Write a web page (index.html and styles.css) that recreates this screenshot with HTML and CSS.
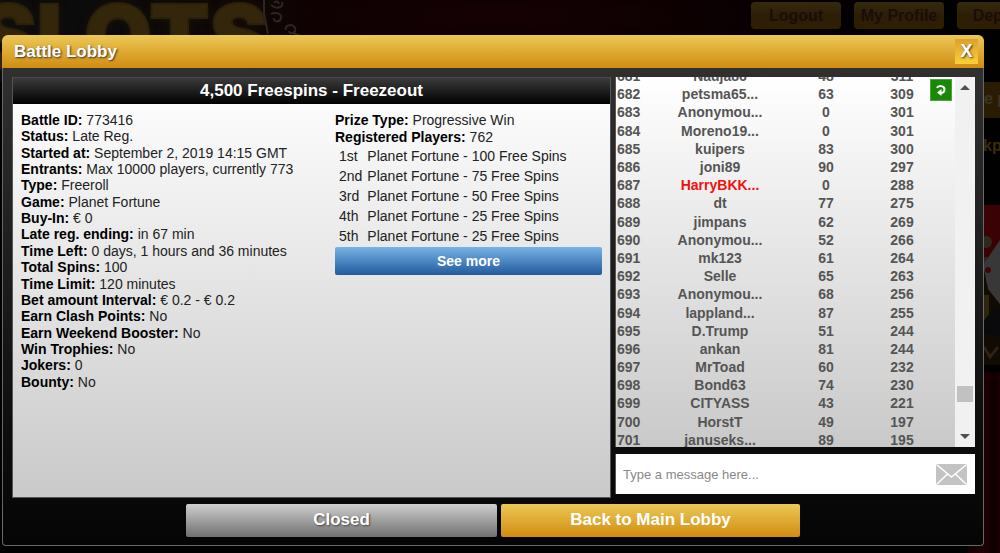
FILE: index.html
```html
<!DOCTYPE html>
<html lang="en">
<head>
    <meta charset="UTF-8">
    <meta name="viewport" content="width=device-width, initial-scale=1.0">
    <title>Battle Lobby</title>
    <link rel="stylesheet" href="styles.css">
</head>
<body>

    <div class="page">
        <header class="top">
            <div class="logo">SLOTS</div>
            <svg class="swirls" width="50" height="36" viewBox="0 0 50 36" fill="none" stroke="#2c2620" stroke-width="2">
                <path d="M4 0v14l4 20M11 5c6 5 13 2 11-3M14 3c2-3 6-1 4 1M11 14c4-2 11-1 10 4s-8 4-7 0M26 30c-2-5 7-7 9-2s-6 7-6 3M33 33l8 3"/>
            </svg>
            <nav class="menu">
                <button>Logout</button>
                <button>My Profile</button>
                <button>Deposit</button>
            </nav>
        </header>
        <aside class="side">
            <div class="side-button">e p</div>
            <div class="side-title">kp</div>
            <svg class="side-art" width="32" height="160" viewBox="0 0 32 160">
                <rect width="32" height="160" fill="#120b04"/>
                <path d="M0 0h32v40L14 58H0z" fill="#3a0204"/>
                <circle cx="18" cy="37" r="6" fill="#2c2a1c"/>
                <circle cx="18" cy="58" r="6" fill="#2c2a1c"/>
                <path d="M15 60L32 35v64L20 84z" fill="#383838"/>
                <circle cx="20" cy="65" r="3" fill="#3f0507"/>
                <path d="M14 90h7v26h-7z" fill="#2f250d"/>
                <path d="M14 118q10-14 18-14v30q-10-8-18-4z" fill="#0a0a0c"/>
                <path d="M16 142l6 10 8-10" stroke="#2d2410" stroke-width="3" fill="none"/>
            </svg>
            <div class="side-curtain"></div>
        </aside>
    </div>

    <div class="modal" role="dialog" aria-labelledby="lobby-title">
        <div class="modal-header">
            <h1 id="lobby-title">Battle Lobby</h1>
            <button class="close">X</button>
        </div>
        <div class="modal-body">
            <section class="info">
                <h2>4,500 Freespins - Freezeout</h2>
                <div class="info-content">
                    <ul class="details">
                        <li><b>Battle ID:</b> 773416</li>
                        <li><b>Status:</b> Late Reg.</li>
                        <li><b>Started at:</b> September 2, 2019 14:15 GMT</li>
                        <li><b>Entrants:</b> Max 10000 players, currently 773</li>
                        <li><b>Type:</b> Freeroll</li>
                        <li><b>Game:</b> Planet Fortune</li>
                        <li><b>Buy-In:</b> € 0</li>
                        <li><b>Late reg. ending:</b> in 67 min</li>
                        <li><b>Time Left:</b> 0 days, 1 hours and 36 minutes</li>
                        <li><b>Total Spins:</b> 100</li>
                        <li><b>Time Limit:</b> 120 minutes</li>
                        <li><b>Bet amount Interval:</b> € 0.2 - € 0.2</li>
                        <li><b>Earn Clash Points:</b> No</li>
                        <li><b>Earn Weekend Booster:</b> No</li>
                        <li><b>Win Trophies:</b> No</li>
                        <li><b>Jokers:</b> 0</li>
                        <li><b>Bounty:</b> No</li>
                    </ul>
                    <div class="prizes">
                        <p><b>Prize Type:</b> Progressive Win</p>
                        <p><b>Registered Players:</b> 762</p>
                        <table class="prize-table">
                            <tr><td>1st</td><td>Planet Fortune - 100 Free Spins</td></tr>
                            <tr><td>2nd</td><td>Planet Fortune - 75 Free Spins</td></tr>
                            <tr><td>3rd</td><td>Planet Fortune - 50 Free Spins</td></tr>
                            <tr><td>4th</td><td>Planet Fortune - 25 Free Spins</td></tr>
                            <tr><td>5th</td><td>Planet Fortune - 25 Free Spins</td></tr>
                        </table>
                        <button class="more">See more</button>
                    </div>
                </div>
            </section>

            <section class="right">
                <div class="ranking">
                    <div class="ranking-list">
                        <table class="players">
                            <tr><td>681</td><td>Nadja86</td><td>48</td><td>311</td></tr>
                            <tr><td>682</td><td>petsma65...</td><td>63</td><td>309</td></tr>
                            <tr><td>683</td><td>Anonymou...</td><td>0</td><td>301</td></tr>
                            <tr><td>684</td><td>Moreno19...</td><td>0</td><td>301</td></tr>
                            <tr><td>685</td><td>kuipers</td><td>83</td><td>300</td></tr>
                            <tr><td>686</td><td>joni89</td><td>90</td><td>297</td></tr>
                            <tr><td>687</td><td class="me">HarryBKK...</td><td>0</td><td>288</td></tr>
                            <tr><td>688</td><td>dt</td><td>77</td><td>275</td></tr>
                            <tr><td>689</td><td>jimpans</td><td>62</td><td>269</td></tr>
                            <tr><td>690</td><td>Anonymou...</td><td>52</td><td>266</td></tr>
                            <tr><td>691</td><td>mk123</td><td>61</td><td>264</td></tr>
                            <tr><td>692</td><td>Selle</td><td>65</td><td>263</td></tr>
                            <tr><td>693</td><td>Anonymou...</td><td>68</td><td>256</td></tr>
                            <tr><td>694</td><td>lappland...</td><td>87</td><td>255</td></tr>
                            <tr><td>695</td><td>D.Trump</td><td>51</td><td>244</td></tr>
                            <tr><td>696</td><td>ankan</td><td>81</td><td>244</td></tr>
                            <tr><td>697</td><td>MrToad</td><td>60</td><td>232</td></tr>
                            <tr><td>698</td><td>Bond63</td><td>74</td><td>230</td></tr>
                            <tr><td>699</td><td>CITYASS</td><td>43</td><td>221</td></tr>
                            <tr><td>700</td><td>HorstT</td><td>49</td><td>197</td></tr>
                            <tr><td>701</td><td>januseks...</td><td>89</td><td>195</td></tr>
                        </table>
                    </div>
                    <button class="refresh" aria-label="Refresh">
                        <svg width="12" height="12" viewBox="0 0 12 12">
                            <path d="M2 4C3 1.500 9.500 1 9.500 5.500C9.500 8 7.500 9 5 9" fill="none" stroke="#fff" stroke-width="2"/>
                            <path d="M6.500 5v7L2 8.500z" fill="#fff"/>
                        </svg>
                    </button>
                    <div class="scrollbar">
                        <svg width="10" height="5" viewBox="0 0 10 5"><path d="M0 5l5-5 5 5z" fill="#505050"/></svg>
                        <div class="thumb"></div>
                        <svg width="10" height="5" viewBox="0 0 10 5"><path d="M0 0l5 5 5-5z" fill="#505050"/></svg>
                    </div>
                </div>
                <form class="chat">
                    <input type="text" aria-label="Message" placeholder="Type a message here...">
                    <button type="button" aria-label="Send">
                        <svg width="31" height="21" viewBox="0 0 31 21">
                            <rect width="31" height="21" rx="2" fill="#c3c3c3"/>
                            <path d="M1 1l14.500 12L30 1M1 20l10.500-10M30 20L19.500 10" fill="none" stroke="#fff" stroke-width="1.500"/>
                        </svg>
                    </button>
                </form>
            </section>
        </div>
        <div class="modal-footer">
            <button class="closed">Closed</button>
            <button class="back">Back to Main Lobby</button>
        </div>
    </div>

</body>
</html>
```

FILE: styles.css
```css
* {
    box-sizing: border-box;
}
body {
    margin: 0;
    height: 100vh;
    overflow: hidden;
    position: relative;
    background: #020101;
    font-family: Arial, "Liberation Sans", sans-serif;
    font-size: 14px;
}
button, input {
    font-family: inherit;
    border: none;
    padding: 0;
}
button {
    cursor: pointer;
    font-weight: bold;
}
h1, h2, p, ul {
    margin: 0;
    padding: 0;
}
svg {
    display: block;
}

/* page behind the lobby */
.page {
    height: 100%;
    overflow: hidden;
    display: flex;
    flex-direction: column;
}
.top {
    display: flex;
    flex: none;
    height: 82px;
    background:
        radial-gradient(ellipse at 50% 20%, #160103, transparent 50%),
        linear-gradient(90deg, #0c0c0d, #0d0806 26%, #090001 32%, #060001 70%, #010101);
}
.logo {
    margin-left: -22px;
    margin-top: -16px;
    font-family: Inter, sans-serif;
    font-weight: 900;
    font-size: 88px;
    line-height: 104px;
    color: #33260a;
    -webkit-text-stroke: 2px #2a200c;
    text-shadow: 0 0 8px #1c1508;
}
.swirls {
    margin-left: -8px;
}
.menu {
    display: flex;
    gap: 13px;
    margin: 2px -47px 0 auto;
}
.menu button {
    width: 90px;
    height: 27px;
    border-radius: 4px;
    background: linear-gradient(#352a0e, #2c1e06 50%, #2f1e02);
    color: #1c0c0a;
    font-size: 16px;
    white-space: nowrap;
}
.side {
    align-self: flex-end;
    width: 32px;
}
.side-button {
    height: 36px;
    line-height: 34px;
    padding-left: 16px;
    margin-bottom: 19px;
    background: #2a1c02;
    color: #3b3524;
    font-size: 16px;
    font-weight: bold;
    white-space: nowrap;
}
.side-title {
    height: 68px;
    padding-left: 15px;
    color: #3b2b0b;
    font-size: 16px;
    font-weight: bold;
}
.side-curtain {
    height: 190px;
    margin-top: 7px;
    background: linear-gradient(90deg, #140001, #1e0002 60%, #0d0001 80%, #1a0002);
}

/* lobby window */
.modal {
    position: absolute;
    top: 35px;
    right: 16px;
    bottom: 7px;
    left: 2px;
    display: flex;
    flex-direction: column;
    border: 1px solid #686868;
    border-top: none;
    border-radius: 7px 7px 4px 4px;
    background: linear-gradient(#333, #2d2d2d 12%, #0c0c0c 80%, #050505);
}
.modal-header {
    display: flex;
    justify-content: space-between;
    align-items: center;
    height: 33px;
    margin: 0 -1px;
    padding: 0 6px 0 12px;
    border-radius: 6px 6px 0 0;
    background: linear-gradient(#ecc857, #d18c10);
}
.modal-header h1 {
    color: white;
    font-size: 17px;
    text-shadow: 1px 1px 2px #333;
}
.close {
    width: 23px;
    height: 25px;
    background: linear-gradient(#dda02c, #f9d036);
    color: white;
    font-size: 18px;
    text-shadow: 1px 1px 2px #333;
}
.modal-body {
    display: flex;
    flex: 1;
    gap: 4px;
    min-height: 0;
    padding: 9px 8px 0 9px;
}
.info {
    flex: 1;
    border: 1px solid #555;
    border-top-color: #484848;
    background: linear-gradient(#fff, #c9c9c9);
}
.info h2 {
    height: 26px;
    line-height: 26px;
    background: linear-gradient(#3b3b3b, #000);
    color: white;
    font-size: 17px;
    text-align: center;
}
.info-content {
    display: flex;
    padding: 8px;
    color: #222;
}
.info-content b {
    color: #000;
}
.details {
    display: grid;
    grid-auto-rows: 1fr;
    flex: 1;
    height: 278px;
    list-style: none;
    line-height: 16px;
}
.prizes {
    width: 267px;
    line-height: 17px;
}
.prize-table {
    border-spacing: 0;
}
.prize-table td {
    height: 20px;
    padding: 0 0 0 4px;
}
.prize-table td:last-child {
    padding-left: 5px;
}
.more {
    width: 100%;
    height: 28px;
    margin-top: 1px;
    border-radius: 2px;
    background: linear-gradient(#78b3e6, #225a9c);
    color: white;
    font-size: 14px;
}

.right {
    display: flex;
    flex-direction: column;
    gap: 7px;
    width: 360px;
    padding-bottom: 4px;
}
.ranking {
    display: flex;
    flex: 1;
    min-height: 0;
    overflow: hidden;
    position: relative;
    border-left: 1px solid #555;
    background: linear-gradient(#fff, #c9c9c9);
}
.ranking-list {
    flex: 1;
    padding-right: 29px;
}
.players {
    width: 100%;
    height: 382px;
    margin-top: -10px;
    border-spacing: 0;
    table-layout: fixed;
    color: #555;
    font-weight: bold;
    line-height: 16px;
}
.players td {
    padding: 0;
    text-align: center;
}
.players td:first-child {
    width: 50px;
    padding-left: 1px;
    text-align: left;
}
.players td:nth-child(2) {
    width: 108px;
}
.players td:nth-child(4) {
    width: 48px;
}
.players .me {
    color: #f01010;
}
.refresh {
    position: absolute;
    top: 2px;
    right: 23px;
    display: grid;
    place-items: center;
    width: 22px;
    height: 22px;
    border: 1px solid #4fa33c;
    background: #188806;
}
.scrollbar {
    display: flex;
    flex-direction: column;
    align-items: center;
    width: 20px;
    padding: 8px 0;
    background: #f1f1f1;
}
.thumb {
    width: 16px;
    height: 16px;
    margin: auto 0 32px;
    background: #c1c1c1;
}
.chat {
    display: flex;
    align-items: center;
    height: 40px;
    padding: 0 8px 0 7px;
    border-left: 1px solid #555;
    background: white;
}
.chat input {
    flex: 1;
    font-size: 13px;
    outline: none;
}
.chat input::placeholder {
    color: #888;
}
.chat button {
    background: none;
}

.modal-footer {
    display: flex;
    justify-content: center;
    gap: 4px;
    padding: 6px 0 8px;
}
.modal-footer button {
    height: 33px;
    padding-bottom: 2px;
    border-radius: 2px;
    color: white;
    font-size: 17px;
    text-shadow: 1px 1px 2px #444;
}
.modal-footer .closed {
    width: 311px;
    background: linear-gradient(#cfcfcf, #6f6f6f);
}
.modal-footer .back {
    width: 299px;
    background: linear-gradient(#ecc857, #d18c10);
    text-shadow: none;
}
```
